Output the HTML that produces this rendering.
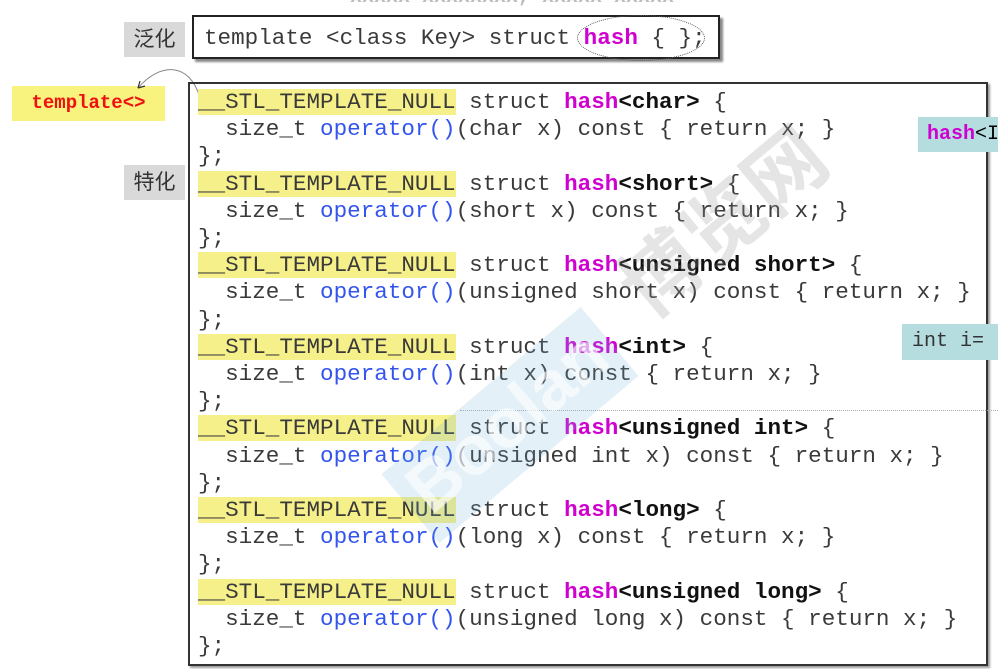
<!DOCTYPE html>
<html><head><meta charset="utf-8"><style>
body{margin:0;width:998px;height:669px;background:#fff;position:relative;overflow:hidden;font-family:"Liberation Mono",monospace;}
.a{position:absolute;white-space:pre;}
.code{font-size:22.6px;line-height:27.2px;color:#3a3a3a;letter-spacing:0}
.y{background:#f6f08a}
.m{color:#d000d0;font-weight:bold}
.b{font-weight:bold;color:#111}
.o{color:#3355ee}
.lab{position:absolute;background:#d9d9d9;color:#333;font-family:"Liberation Sans","Noto Sans CJK SC",sans-serif;font-size:21px;text-align:center}
</style></head><body>
<div class="a" style="left:350px;top:-14px;font-size:20px;color:#bbb;font-weight:bold">xxxxx xxxxxxxx, xxxxx xxxxx</div>
<div class="lab" style="left:124px;top:22px;width:61px;height:35px;line-height:35px">泛化</div>
<div class="lab" style="left:124px;top:165px;width:61px;height:35px;line-height:35px">特化</div>
<div class="a" style="left:192px;top:15px;width:524px;height:40px;border:2px solid #222;box-shadow:3px 3px 2px #888"></div>
<div class="a code" style="left:204px;top:25px">template &lt;class Key&gt; struct <span class="m">hash</span> { };</div>
<div class="a" style="left:577px;top:15px;width:126px;height:44px;border:1.5px dotted #555;border-radius:50%"></div>
<div class="a" style="left:12px;top:86px;width:153px;height:35px;background:#f8f27e;color:#ee1111;font-weight:bold;font-size:19px;line-height:35px;text-align:center">template&lt;&gt;</div>
<svg class="a" style="left:130px;top:62px" width="80" height="40"><path d="M70 36 C60 0 30 0 8 26" fill="none" stroke="#888" stroke-width="1"/><path d="M8 26 l2 -7 M8 26 l7 -2" stroke="#333" stroke-width="1.2"/></svg>
<div class="a" style="left:188px;top:82px;width:796px;height:580px;border:2px solid #333;box-shadow:2px 2px 2px #999"></div>
<div class="a" style="left:460px;top:410px;width:538px;border-top:1.5px dotted #aaa"></div>
<div class="a code" style="left:198px;top:89px"><span class="y">__STL_TEMPLATE_NULL</span> struct <span class="m">hash</span><span class="b">&lt;char&gt;</span> {
  size_t <span class="o">operator()</span>(char x) const { return x; }
};
<span class="y">__STL_TEMPLATE_NULL</span> struct <span class="m">hash</span><span class="b">&lt;short&gt;</span> {
  size_t <span class="o">operator()</span>(short x) const { return x; }
};
<span class="y">__STL_TEMPLATE_NULL</span> struct <span class="m">hash</span><span class="b">&lt;unsigned short&gt;</span> {
  size_t <span class="o">operator()</span>(unsigned short x) const { return x; }
};
<span class="y">__STL_TEMPLATE_NULL</span> struct <span class="m">hash</span><span class="b">&lt;int&gt;</span> {
  size_t <span class="o">operator()</span>(int x) const { return x; }
};
<span class="y">__STL_TEMPLATE_NULL</span> struct <span class="m">hash</span><span class="b">&lt;unsigned int&gt;</span> {
  size_t <span class="o">operator()</span>(unsigned int x) const { return x; }
};
<span class="y">__STL_TEMPLATE_NULL</span> struct <span class="m">hash</span><span class="b">&lt;long&gt;</span> {
  size_t <span class="o">operator()</span>(long x) const { return x; }
};
<span class="y">__STL_TEMPLATE_NULL</span> struct <span class="m">hash</span><span class="b">&lt;unsigned long&gt;</span> {
  size_t <span class="o">operator()</span>(unsigned long x) const { return x; }
};</div>
<div class="a" style="left:918px;top:117px;width:80px;height:35px;background:#b5dde0;font-size:20px;line-height:35px;padding-left:9px"><span class="m">hash</span>&lt;I</div>
<div class="a" style="left:902px;top:324px;width:96px;height:36px;background:#b5dde0;font-size:20px;line-height:36px;padding-left:10px;color:#333">int i=</div>
<div class="a" style="left:380px;top:380px;width:260px;height:90px;background:rgba(120,180,220,0.2);transform:rotate(-40deg);color:rgba(255,255,255,0.6);font:bold 70px 'Liberation Sans',sans-serif;text-align:center">Boolan</div>
<div class="a" style="left:600px;top:160px;font:bold 80px 'Noto Sans CJK SC',sans-serif;color:rgba(150,150,150,0.25);transform:rotate(-40deg)">博览网</div>
</body></html>
